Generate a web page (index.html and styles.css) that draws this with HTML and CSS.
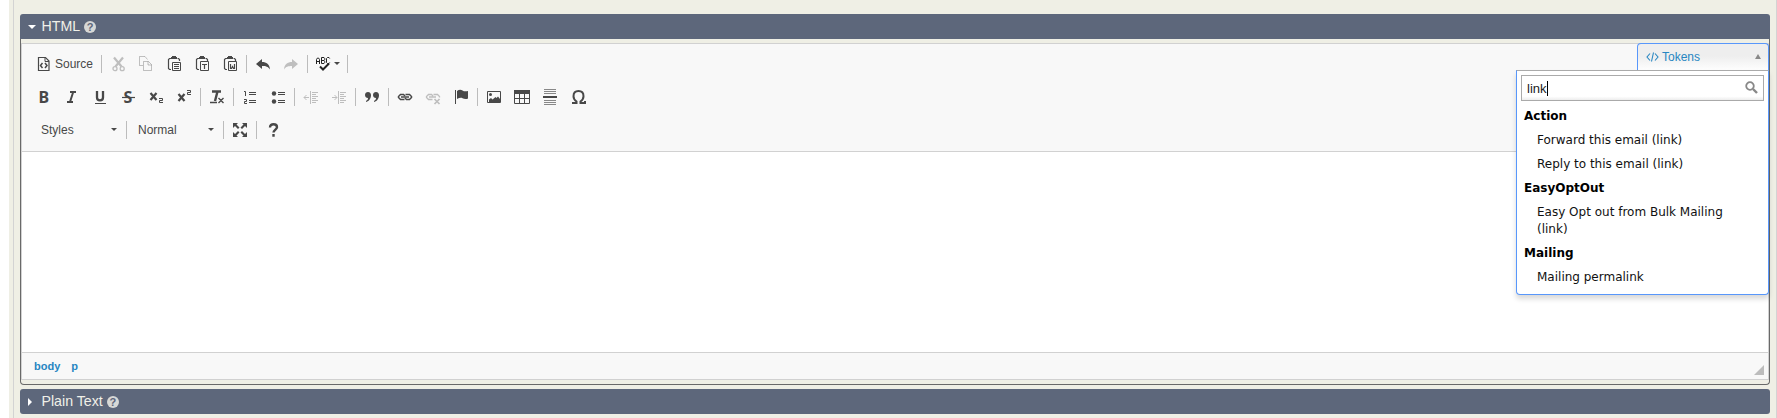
FILE: index.html
```html
<!DOCTYPE html>
<html lang="en">
<head>
<meta charset="utf-8">
<title>Mailing editor</title>
<link rel="stylesheet" href="styles.css">
</head>
<body>
<main class="page">
  <section class="accordion open">
    <header class="bar"><span class="caret down"></span><span class="bar-title">HTML</span><span class="help">?</span></header>
    <div class="panel">
      <div class="editor">
        <div class="toolbar">
          <div class="row">
            <span class="btn source"><svg viewBox="0 0 16 16"><path d="M1.500 1.500h7l3.500 3.500v9.500h-10.500z" fill="none" stroke="#484848" stroke-width="1.200"/><path d="M8 2v3.500h4" fill="none" stroke="#484848"/><path d="M5.500 7l-2 2.500 2 2.500M8 7l2 2.500-2 2.500" fill="none" stroke="#484848" stroke-width="1.500"/></svg><span class="label">Source</span></span>
            <i class="sep"></i>
            <span class="btn off"><svg viewBox="0 0 16 16"><path d="M3 1.500l7.500 9M12 1.500l-7.500 9" fill="none" stroke="#484848" stroke-width="2.200"/><circle cx="4" cy="12.700" r="2" fill="none" stroke="#484848" stroke-width="1.300"/><circle cx="11.200" cy="12.700" r="2" fill="none" stroke="#484848" stroke-width="1.300"/></svg></span>
            <span class="btn off"><svg viewBox="0 0 16 16"><path d="M4 9.500H.5V.5H6l2.500 3M4.500 5.500h5l3 3v6h-8zM9 5.500V9h3.500" fill="none" stroke="#484848"/></svg></span>
            <span class="btn"><svg viewBox="0 0 16 16"><path d="M4 2.500H2.500l-1 1v9l1 1H4M10.500 2.500h1l1 1V5" fill="none" stroke="#484848" stroke-width="1.200"/><path d="M4 1h1V0h4v1h1v2H4z" fill="#484848"/><path d="M5.500 6.500h8v8h-8z" fill="none" stroke="#484848"/><path d="M7 8.500h5M7 10.500h5M7 12.500h5" stroke="#484848"/></svg></span>
            <span class="btn"><svg viewBox="0 0 16 16"><path d="M4 2.500H2.500l-1 1v9l1 1H4M10.500 2.500h1l1 1V5" fill="none" stroke="#484848" stroke-width="1.200"/><path d="M4 1h1V0h4v1h1v2H4z" fill="#484848"/><path d="M5.500 5.500h8v9h-8z" fill="none" stroke="#484848"/><path d="M7 8.500h5M9.500 8v5" stroke="#484848" stroke-width="1.200"/></svg></span>
            <span class="btn"><svg viewBox="0 0 16 16"><path d="M4 2.500H2.500l-1 1v9l1 1H4M10.500 2.500h1l1 1V5" fill="none" stroke="#484848" stroke-width="1.200"/><path d="M4 1h1V0h4v1h1v2H4z" fill="#484848"/><path d="M5.500 5.500h8v9h-8z" fill="none" stroke="#484848"/><path d="M7.500 8v4.500h1l1-2 1 2h1V8" fill="none" stroke="#484848" stroke-width="1.200"/></svg></span>
            <i class="sep"></i>
            <span class="btn"><svg viewBox="0 0 16 16"><path d="M0 8l6-5v3c4.500 0 7.500 2 8 7.500C12 10.500 10 10 6 10v3z" fill="#484848"/></svg></span>
            <span class="btn off"><svg viewBox="0 0 16 16"><path d="M14 8L8 3v3c-4.500 0-7.500 2-8 7.500C2 10.500 4 10 8 10v3z" fill="#484848"/></svg></span>
            <i class="sep"></i>
            <span class="btn spell"><svg viewBox="0 0 16 16"><path d="M.5 8V3.500l1-1.500h1l1 1.500V8M.5 5.500h3M5.500 7.500v-6h2.500l.7.700v1.600l-.7.700H5.500M8 4.500l.7.700v1.600l-.7.700H5.500M13.700 2.500l-.7-1h-1.500l-1 1v4l1 1H13l.7-1" fill="none" stroke="#222"/><path d="M4 10.500l3 3 6-6" fill="none" stroke="#222" stroke-width="2"/></svg><b class="arrow"></b></span>
            <i class="sep"></i>
          </div>
          <div class="row">
            <span class="btn"><svg viewBox="0 0 16 16"><text x="1.500" y="14" class="g-bold">B</text></svg></span>
            <span class="btn"><svg viewBox="0 0 16 16"><path d="M5 3h6M2 13h6M8.200 3l-3.200 10" fill="none" stroke="#484848" stroke-width="2"/></svg></span>
            <span class="btn"><svg viewBox="0 0 16 16"><path d="M4 2v6.500c0 2 1 2.800 3 2.800s3-.8 3-2.800V2" fill="none" stroke="#484848" stroke-width="2.300"/><path d="M2 14.500h11" stroke="#484848"/></svg></span>
            <span class="btn"><svg viewBox="0 0 16 16"><text x="2.500" y="14" class="g-bold">S</text><path d="M1 8.500h13" stroke="#484848" stroke-width="1.200"/></svg></span>
            <span class="btn"><svg viewBox="0 0 16 16"><path d="M1.500 4l6 7M7.500 4l-6 7" stroke="#484848" stroke-width="2.200"/><path d="M10 9.500h3.500v2h-3v2H14" fill="none" stroke="#484848"/></svg></span>
            <span class="btn"><svg viewBox="0 0 16 16"><path d="M1.500 5l6 7M7.500 5l-6 7" stroke="#484848" stroke-width="2.200"/><path d="M10 1.500h3.500v2h-3v2H14" fill="none" stroke="#484848"/></svg></span>
            <i class="sep"></i>
            <span class="btn"><svg viewBox="0 0 16 16"><path d="M2 2.500h9M7.500 2.500L5 12" fill="none" stroke="#484848" stroke-width="2.400"/><path d="M0 13.500h7M8.500 9l5 5M13.500 9l-5 5" stroke="#484848" stroke-width="1.400"/></svg></span>
            <i class="sep"></i>
            <span class="btn"><svg viewBox="0 0 16 16"><path d="M1 2.500h1.500V7M1 10.500h2.500v2h-2v2H4" fill="none" stroke="#484848"/><path d="M6 3.500h7M6 5.500h7M6 11.500h7M6 13.500h7" stroke="#484848"/></svg></span>
            <span class="btn"><svg viewBox="0 0 16 16"><circle cx="3" cy="4.500" r="2.200" fill="#484848"/><circle cx="3" cy="12.500" r="2.200" fill="#484848"/><path d="M7 3.500h7M7 5.500h7M7 11.500h7M7 13.500h7" stroke="#484848"/></svg></span>
            <i class="sep"></i>
            <span class="btn off"><svg viewBox="0 0 16 16"><path d="M0 8.500h5M2.500 6L0 8.500 2.500 11M6.500 2v13" fill="none" stroke="#484848"/><path d="M8 3.500h6M8 5.500h4M8 7.500h6M8 9.500h4M8 11.500h6M8 13.500h4" stroke="#484848"/></svg></span>
            <span class="btn off"><svg viewBox="0 0 16 16"><path d="M0 8.500h5M2.500 6L5 8.500 2.500 11M6.500 2v13" fill="none" stroke="#484848"/><path d="M8 3.500h6M8 5.500h4M8 7.500h6M8 9.500h4M8 11.500h6M8 13.500h4" stroke="#484848"/></svg></span>
            <i class="sep"></i>
            <span class="btn"><svg viewBox="0 0 16 16"><path id="q" d="M3 3c2 0 3 1.300 3 3.200C6 9 4.500 12 1 13v-1c1.500-.8 2-1.800 2-3C1.300 9 0 7.700 0 6s1.300-3 3-3z" fill="#484848"/><use href="#q" x="8"/></svg></span>
            <i class="sep"></i>
            <span class="btn"><svg viewBox="0 0 16 16"><path d="M6.500 10.500h-4l-2-2v-1l2-2h3l1.500 1.500M7.500 5.500h4l2 2v1l-2 2h-3L7 9" fill="none" stroke="#484848" stroke-width="1.500"/><path d="M3 8h8" stroke="#484848" stroke-width="1.500"/></svg></span>
            <span class="btn off"><svg viewBox="0 0 16 16"><path d="M6.500 10.500h-4l-2-2v-1l2-2h3l1.500 1.500M7.500 5.500h4l2 2v1M3 8h7" fill="none" stroke="#484848" stroke-width="1.300"/><path d="M8.500 10l5 5M13.500 10l-5 5" stroke="#484848" stroke-width="1.700"/></svg></span>
            <span class="btn"><svg viewBox="0 0 16 16"><path d="M1.500 1v14" stroke="#484848"/><path d="M3 2c2-1.500 4-1.500 5.500-.5S12 2.500 14 2v7.500c-2 1-4 .5-5.500-.3S5 9 3 10z" fill="#484848"/></svg></span>
            <i class="sep"></i>
            <span class="btn"><svg viewBox="0 0 16 16"><path d="M.5 2.500h13v11H.5z" fill="none" stroke="#484848"/><circle cx="3.500" cy="5.500" r="1.500" fill="#484848"/><path d="M2 13v-2.500L4 9l1.500 1.500L8.500 8l1 1 1.500-1.500L13 10v3z" fill="#484848"/></svg></span>
            <span class="btn"><svg viewBox="-1 0 16 16" class="nudge"><path d="M-.500 1.500h15v13h-15zM0 9.500h14M4.500 5v9M9.500 5v9" fill="none" stroke="#484848"/><path d="M-1 1h16v4H-1z" fill="#484848"/></svg></span>
            <span class="btn"><svg viewBox="0 0 16 16"><path d="M1 .5h12M1 2.500h12M1 4.500h12M1 11.500h12M1 13.500h12M1 15.500h12" stroke="#888"/><path d="M0 8h14" stroke="#484848" stroke-width="2"/></svg></span>
            <span class="btn"><svg viewBox="0 0 16 16"><path d="M1 14h4.500v-1.500C3.500 11 2.500 9.500 2.500 7.200 2.500 4 4.500 2 7.500 2s5 2 5 5.200c0 2.300-1 3.800-3 5.300V14H14v-2" fill="none" stroke="#484848" stroke-width="2"/></svg></span>
          </div>
          <div class="row">
            <span class="combo styles"><span>Styles</span><b class="arrow"></b></span>
            <i class="sep"></i>
            <span class="combo format"><span>Normal</span><b class="arrow"></b></span>
            <i class="sep"></i>
            <span class="btn"><svg viewBox="0 0 16 16"><path id="m" d="M0 1h5L3.500 2.500 6.500 5.500 5 7 2 4 0 6z" fill="#484848"/><use href="#m" transform="translate(14 0) scale(-1 1)"/><use href="#m" transform="translate(0 16) scale(1 -1)"/><use href="#m" transform="translate(14 16) scale(-1 -1)"/></svg></span>
            <i class="sep"></i>
            <span class="btn"><svg viewBox="0 0 16 16"><path d="M4 5.500C4 3.200 5.500 2.200 7.500 2.200s3.500 1 3.500 3-3.500 2.800-3.500 5.300M7.500 12v2.800" fill="none" stroke="#484848" stroke-width="2.400"/></svg></span>
          </div>
        </div>
        <div class="canvas"></div>
        <footer class="path"><span>body</span><span>p</span><i class="grip"></i></footer>
      </div>
      <div class="tokens"><svg class="code" viewBox="0 0 13 12"><path d="M4 2.500L1 6l3 3.500M9 2.500L12 6 9 9.500M7.500 1.500l-2 9" fill="none" stroke="#2786c2" stroke-width="1.100"/></svg><span>Tokens</span><b class="up"></b></div>
      <div class="drop">
        <div class="search"><span class="query">link</span><i class="cursor"></i><svg viewBox="0 0 14 14"><circle cx="5" cy="5" r="3.800" fill="none" stroke="#888" stroke-width="1.800"/><path d="M8 8l4 4" stroke="#888" stroke-width="2.400"/></svg></div>
        <ul class="results">
          <li class="group">Action</li>
          <li>Forward this email (link)</li>
          <li>Reply to this email (link)</li>
          <li class="group">EasyOptOut</li>
          <li>Easy Opt out from Bulk Mailing (link)</li>
          <li class="group">Mailing</li>
          <li>Mailing permalink</li>
        </ul>
      </div>
    </div>
  </section>
  <section class="accordion">
    <header class="bar closed"><span class="caret right"></span><span class="bar-title">Plain Text</span><span class="help">?</span></header>
  </section>
</main>
</body>
</html>
```
FILE: styles.css
```css
* { box-sizing: border-box; }
body { margin: 0; background: #fff; font-family: "Liberation Sans", Arial, sans-serif; }
.page { height: 418px; margin-left: 9px; padding: 14px 6px 0 11px; background: linear-gradient(#d3d3d3, #d3d3d3) 4px 0 / 1px 100% no-repeat, #efefe5; border-right: 1px solid #d3d3d3; overflow: hidden; }
.accordion { width: 1750px; }
.accordion.open { height: 375px; }
.bar { display: flex; align-items: center; height: 25px; padding-left: 8px; background: #5d677b; border-radius: 3px 3px 0 0; color: #f0f0e8; font-size: 14.2px; }
.bar.closed { border-radius: 3px; }
.caret { width: 8px; margin-right: 5.500px; }
.bar-title { line-height: 25px; }
.caret::before { content: ""; display: block; width: 0; height: 0; border: 4px solid transparent; }
.caret.down::before { border-top-color: #fff; border-bottom-width: 0; }
.caret.right::before { border-left-color: #fff; border-right-width: 0; }
.help { width: 12px; height: 12px; margin-left: 4px; border-radius: 50%; background: #d7d8d6; color: #5d677b; font: bold 11px/13px "Liberation Sans", sans-serif; text-align: center; }
.panel { position: relative; height: 346px; padding: 4px 0 4px; border: 1px solid #696969; border-top: 0; border-radius: 0 0 4px 4px; }
.editor { border: 1px solid #d1d1d1; height: 337px; background: #fff; }
.toolbar { height: 108px; padding: 3px 0 0 9px; background: #f8f8f8; border-bottom: 1px solid #d1d1d1; }
.row { display: flex; align-items: center; height: 33px; color: #484848; font-size: 12px; }
.btn { display: flex; align-items: center; width: 28px; height: 28px; padding: 0 6px; }
.btn svg { width: 16px; height: 16px; flex: none; overflow: visible; }
.btn .nudge { margin-left: -1px; }
.off svg { opacity: .32; }
.source { width: 69px; }
.label { margin-left: 2px; }
.spell { width: 35px; padding-left: 5px; }
.sep { width: 1px; height: 18px; margin: 0 3px 0 1px; background: #bcbcbc; }
.arrow { width: 0; border: 3px solid transparent; border-top-color: #484848; border-bottom: 0; }
.spell .arrow { margin-left: 2px; flex: none; }
.g-bold { font: bold 16px "Noto Sans", sans-serif; fill: #484848; }
.combo { display: flex; align-items: center; justify-content: space-between; height: 28px; padding: 0 8px 0 10px; }
.styles { width: 94px; }
.format { width: 92px; padding-left: 8px; }
.canvas { height: 200px; background: #fff; }
.path { display: flex; align-items: center; gap: 11px; height: 27px; padding: 0 4px 0 12px; background: #f8f8f8; border-top: 1px solid #d1d1d1; color: #2786c2; font-size: 11px; font-weight: bold; }
.grip { margin: 8px 0 0 auto; border: 5px solid #bcbcbc; border-left-color: transparent; border-top-color: transparent; }
.tokens { position: absolute; top: 4px; right: 0; display: flex; align-items: center; width: 132px; height: 28px; padding: 0 7px 2px 8px; border: 1px solid #5897fb; border-bottom: 0; border-radius: 4px 4px 0 0; background: linear-gradient(#eee, #eee 45%, #fff); color: #2786c2; font-size: 12px; }
.code { width: 13px; height: 12px; margin-right: 3px; }
.up { width: 0; margin-left: auto; border: 3px solid transparent; border-bottom: 5px solid #888; border-top: 0; }
.drop { position: absolute; top: 31px; right: 0; width: 253px; height: 225px; padding: 4px; border: 1px solid #5897fb; border-top-color: #aaa; border-radius: 0 0 4px 4px; background: #fff; box-shadow: 0 4px 5px rgba(0, 0, 0, .15); }
.search { display: flex; align-items: center; width: 243px; height: 26px; padding: 1px 4px 0 5px; border: 1px solid #aaa; background: linear-gradient(#fff 85%, #eee 99%); font-size: 13px; color: #222; }
.cursor { width: 1px; height: 15px; background: #000; }
.search svg { width: 14px; height: 14px; margin: 0 0 1px auto; }
.results { margin: 4px 0 0; padding: 0; list-style: none; color: #111; font: 12px/17px "DejaVu Sans", sans-serif; }
.results li { padding: 3px 22px 4px 16px; }
.results .group { padding-left: 3px; color: #000; font-weight: bold; }
```
